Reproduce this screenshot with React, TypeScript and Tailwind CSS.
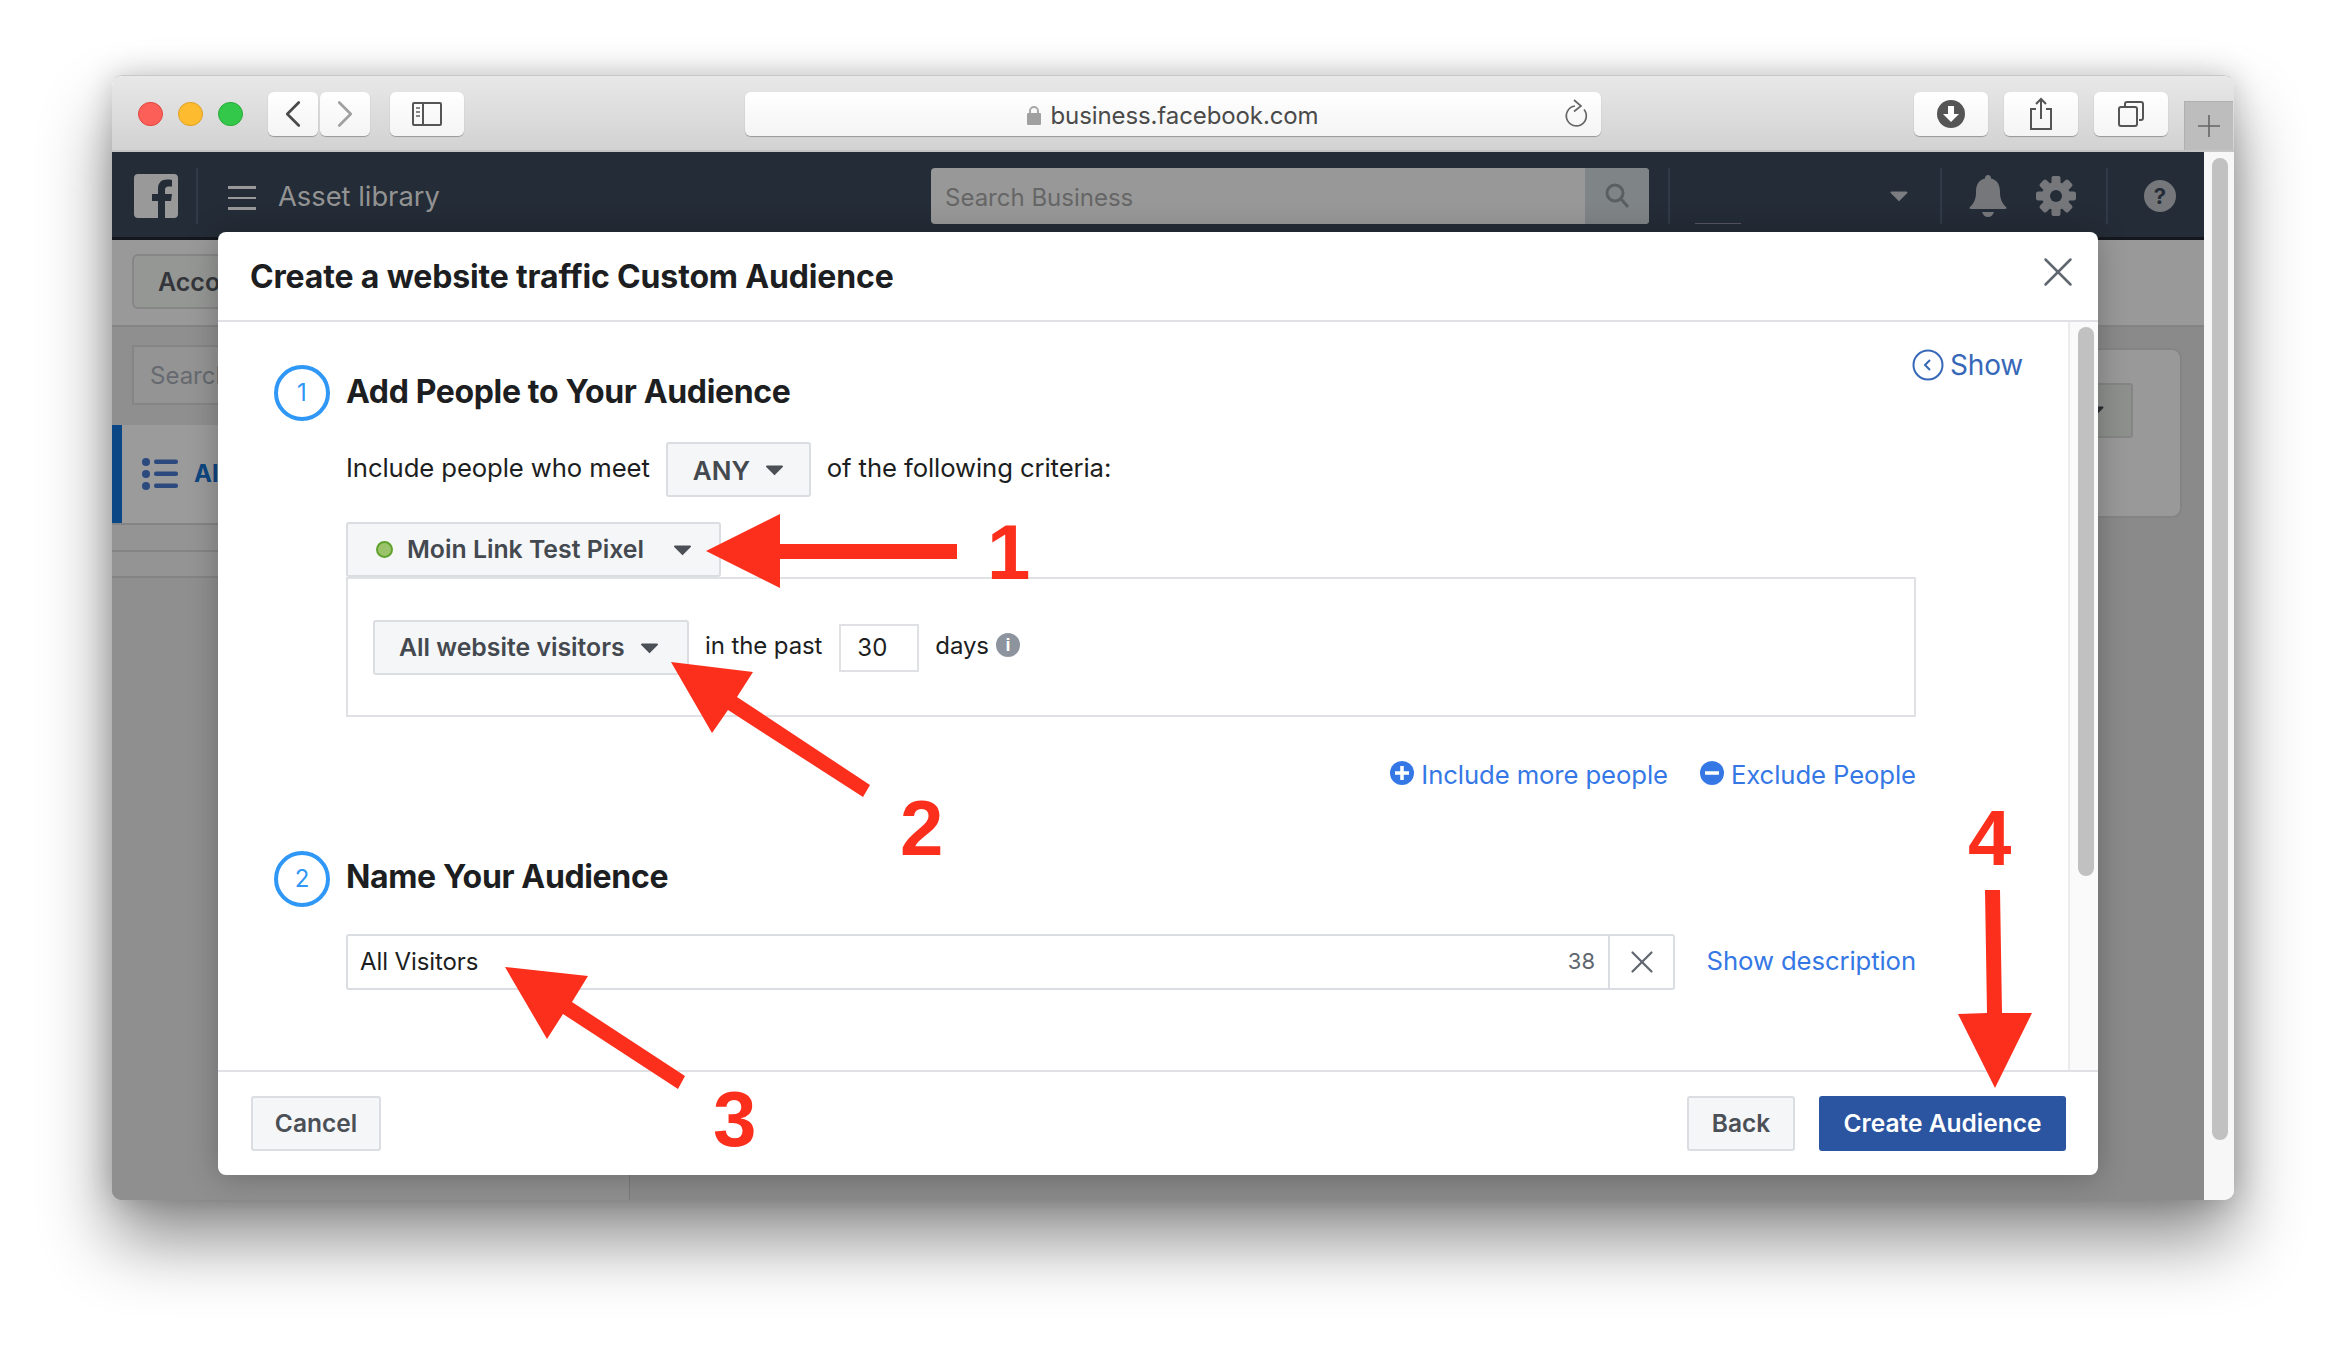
import { ChevronLeft, ChevronRight, X } from 'lucide-react'

const UI_FONT = 'font-["Inter","Noto_Sans",sans-serif]'

function Caret({ className }: { className: string }) {
  return (
    <svg viewBox="0 0 18 12" className={className}>
      <path d="M1.500 1.500h15a1 1 0 0 1 .8 1.600L9.800 10.600a1 1 0 0 1-1.600 0L.7 3.100a1 1 0 0 1 .8-1.600z" fill="currentColor" />
    </svg>
  )
}

function ToolButton({ className, children }: { className: string; children: React.ReactNode }) {
  return (
    <div className={`h-[44px] shrink-0 flex items-center justify-center rounded-[6px] bg-gradient-to-b from-[#ffffff] to-[#f4f4f4] shadow-[0_1px_1px_rgba(0,0,0,0.3)] ${className}`}>
      {children}
    </div>
  )
}

function Toolbar() {
  return (
    <div className="h-[76px] shrink-0 flex items-start pt-[16px] pl-[26px] rounded-t-[10px] border-b-2 border-[#c4c4c4] bg-gradient-to-b from-[#e8e8e8] to-[#d2d2d2]">
      <div className="flex gap-[15px] pt-[10px] shrink-0">
        <div className="w-[25px] h-[24px] rounded-full bg-[#fc5f58] border border-[#e2463f]" />
        <div className="w-[25px] h-[24px] rounded-full bg-[#fdbc30] border border-[#dfa023]" />
        <div className="w-[25px] h-[24px] rounded-full bg-[#34c84a] border border-[#29ab37]" />
      </div>
      <ToolButton className="w-[50px] ml-[25px]"><ChevronLeft size={46} strokeWidth={1.4} className="text-[#4a4a4a]" /></ToolButton>
      <ToolButton className="w-[50px] ml-[2px]"><ChevronRight size={46} strokeWidth={1.4} className="text-[#a0a0a0]" /></ToolButton>
      <ToolButton className="w-[74px] ml-[20px]">
        <svg width="30" height="24" viewBox="0 0 30 24" fill="none" stroke="#555" strokeWidth="2">
          <rect x="1" y="1" width="28" height="22" rx="1" />
          <path d="M11 1v22" />
          <path d="M4 6h4M4 10h4M4 14h4" strokeWidth="2" stroke="#888" />
        </svg>
      </ToolButton>
      <div className="w-[856px] ml-[281px] relative">
        <ToolButton className="w-full">
          <svg width="16" height="20" viewBox="0 0 16 20" className="mr-[8px] mt-[2px] -ml-[1px]">
            <path d="M4 9V6a4 4 0 0 1 8 0v3" fill="none" stroke="#a8a8a8" strokeWidth="2" />
            <rect x="1" y="8" width="14" height="12" rx="1" fill="#a0a0a0" />
          </svg>
          <span className="mt-[3px] font-['Inter',sans-serif] text-[24px] text-[#4a4a4a] tracking-[-0.1px]">business.facebook.com</span>
        </ToolButton>
        <svg width="24" height="30" viewBox="0 0 24 30" fill="none" stroke="#666" strokeWidth="1.700" className="absolute right-[13px] top-[6px]">
          <path d="M20 11.500A10 10 0 1 1 11 8" />
          <path d="M10 2l7 6-7 5.500" fill="none" />
        </svg>
      </div>
      <ToolButton className="w-[74px] ml-[313px]">
        <svg width="28" height="28" viewBox="0 0 28 28">
          <circle cx="14" cy="14" r="14" fill="#555" />
          <path d="M11 6h6v8h5l-8 8-8-8h5z" fill="#fff" />
        </svg>
      </ToolButton>
      <ToolButton className="w-[74px] ml-[16px]">
        <svg width="24" height="34" viewBox="0 0 24 34" fill="none" stroke="#555" strokeWidth="2">
          <path d="M7 12H2v20h20V12h-5" />
          <path d="M12 22V2M7 7l5-5 5 5" />
        </svg>
      </ToolButton>
      <ToolButton className="w-[74px] ml-[16px]">
        <svg width="26" height="26" viewBox="0 0 26 26" fill="none" stroke="#555" strokeWidth="2">
          <rect x="1" y="6" width="18" height="19" rx="2" />
          <path d="M7 5V3a2 2 0 0 1 2-2h14a2 2 0 0 1 2 2v14a2 2 0 0 1-2 2h-2" />
        </svg>
      </ToolButton>
      <div className="w-[49px] h-[49px] ml-[16px] mt-[9px] flex items-center justify-center bg-[#bdbdbd] border-l border-t border-[#b0b0b0] shrink-0">
        <svg width="22" height="22" viewBox="0 0 22 22" stroke="#666" strokeWidth="1.600"><path d="M11 0v22M0 11h22" /></svg>
      </div>
    </div>
  )
}

function Gear() {
  return (
    <svg width="40" height="40" viewBox="0 0 40 40" className="ml-[29px] shrink-0">
      {[0, 45, 90, 135].map(a => (
        <rect key={a} x="15.500" y="0" width="9" height="40" rx="2" fill="#75777b" transform={`rotate(${a} 20 20)`} />
      ))}
      <circle cx="20" cy="20" r="14" fill="#75777b" />
      <circle cx="20" cy="20" r="6" fill="#242c37" />
    </svg>
  )
}

function NavBar() {
  return (
    <div className="h-[88px] shrink-0 flex items-start pt-[16px] bg-[#242c37] border-b-[3px] border-[#14181e] text-[#9a9a9a]">
      <svg width="44" height="44" viewBox="0 0 44 44" className="ml-[22px] mt-[6px] shrink-0">
        <path d="M4 0h36a4 4 0 0 1 4 4v36a4 4 0 0 1-4 4H31V27h6l1-7h-7v-4c0-2 1-3.500 3.500-3.500H38V6c-1-.2-3-.4-5-.4-5.500 0-9 3.300-9 9V20h-6v7h6v17H4a4 4 0 0 1-4-4V4a4 4 0 0 1 4-4z" fill="#999" />
      </svg>
      <div className="w-[2px] h-[56px] ml-[18px] bg-[#303b49] shrink-0" />
      <div className="ml-[30px] mt-[18px] flex flex-col gap-[8px] shrink-0">
        <div className="w-[28px] h-[2.500px] bg-[#999]" />
        <div className="w-[28px] h-[2.500px] bg-[#999]" />
        <div className="w-[28px] h-[2.500px] bg-[#999]" />
      </div>
      <span className="ml-[22px] mt-[11px] w-[653px] shrink-0 font-['Inter',sans-serif] text-[27.300px] leading-[36px] text-[#939393]">Asset library</span>
      <div className="w-[718px] h-[56px] shrink-0 flex rounded-[4px] overflow-hidden bg-[#989898]">
        <span className="flex-1 pl-[14px] pt-[2px] font-['Inter',sans-serif] text-[24px] leading-[56px] text-[#666]">Search Business</span>
        <div className="w-[64px] flex items-center justify-center bg-[#7f8487]">
          <svg width="24" height="26" viewBox="0 0 24 26" fill="none" stroke="#5a5f63" strokeWidth="3">
            <circle cx="10" cy="10" r="8" /><path d="M16 16l7 8" />
          </svg>
        </div>
      </div>
      <div className="w-[2px] h-[56px] ml-[19px] bg-[#303b49] shrink-0" />
      <div className="relative w-[270px] h-[56px] shrink-0 flex items-center justify-end pr-[32px]">
        <Caret className="w-[18px] h-[12px] text-[#7b7d80]" />
        <div className="absolute left-[25px] bottom-0 w-[46px] h-px bg-[#556]" />
      </div>
      <div className="w-[2px] h-[56px] bg-[#303b49] shrink-0" />
      <div className="relative w-[166px] h-[56px] shrink-0 flex items-center">
        <svg width="38" height="42" viewBox="0 0 38 42" className="ml-[27px] shrink-0" fill="#75777b">
          <path d="M19 0c2 0 3 1.500 3 3.500C29 5 31 11 31 17c0 7 2 11 6 15 1 1 .5 2-1 2H2c-1.500 0-2-1-1-2 4-4 6-8 6-15C7 11 9 5 16 3.500 16 1.500 17 0 19 0zM13 37h12c-1 3-3 5-6 5s-5-2-6-5z" />
        </svg>
        <Gear />
        <div className="absolute right-0 top-0 w-[2px] h-[56px] bg-[#303b49]" />
      </div>
      <div className="ml-[36px] mt-[12px] w-[32px] h-[32px] rounded-full bg-[#75777b] text-[#242c37] flex items-center justify-center font-['Inter',sans-serif] font-bold text-[22px] shrink-0">?</div>
    </div>
  )
}

// The dimmed asset library page behind the dialog.
function BackgroundPage() {
  return (
    <div className="flex-1 flex flex-col min-h-0 bg-[#8b8b8b]">
      <div className="h-[87px] shrink-0 pl-[20px] pt-[14px] bg-[#999999] border-b-2 border-[#848484]">
        <div className="w-[220px] h-[55px] pl-[24px] rounded-[6px] border-2 border-[#868686] bg-[#959795] font-['Inter',sans-serif] font-semibold text-[25px] leading-[53px] text-[#33353a]">Acco</div>
      </div>
      <div className="flex-1 flex min-h-0">
        <div className="w-[518px] shrink-0 flex flex-col border-r border-[#7a7a7a] bg-[#8f8f90]">
          <div className="h-[98px] shrink-0 pl-[20px] pt-[18px]">
            <div className="w-[300px] h-[60px] pl-[16px] border-2 border-[#858585] bg-[#949494] font-['Inter',sans-serif] text-[24px] leading-[58px] text-[#666a70]">Search</div>
          </div>
          <div className="h-[98px] shrink-0 flex items-center border-l-[10px] border-[#0b4785] bg-[#9b9b9b]">
            <svg width="36" height="34" viewBox="0 0 36 34" className="ml-[20px] shrink-0" fill="#2c4a7e">
              <circle cx="4" cy="5" r="4" /><circle cx="4" cy="17" r="4" /><circle cx="4" cy="29" r="4" />
              <rect x="12" y="2.500" width="24" height="4.500" rx="2" /><rect x="12" y="14.500" width="24" height="4.500" rx="2" /><rect x="12" y="26.500" width="24" height="4.500" rx="2" />
            </svg>
            <span className="ml-[16px] font-['Inter',sans-serif] font-bold text-[24px] text-[#0e4680]">All</span>
          </div>
          <div className="h-[27px] shrink-0 border-t-2 border-[#848484] bg-[#949494]" />
          <div className="h-[26px] shrink-0 border-t-2 border-[#848484] bg-[#949494]" />
          <div className="flex-1 border-t-2 border-[#848484] bg-[#8f8f8f]" />
        </div>
        <div className="flex-1 flex justify-end items-start pt-[21px] pr-[22px] bg-[#8a8a8a]">
          <div className="w-[400px] h-[170px] flex justify-end items-start pt-[33px] pr-[47px] rounded-[10px] border-2 border-[#848484] bg-[#999999]">
            <div className="w-[120px] h-[55px] flex items-center justify-end pr-[27px] rounded-[3px] border-2 border-[#858585] bg-[#8e908e]">
              <Caret className="w-[18px] h-[12px] text-[#2b2d31]" />
            </div>
          </div>
        </div>
      </div>
    </div>
  )
}

function StepHeading({ n, title }: { n: number; title: string }) {
  return (
    <div className="flex items-center">
      <div className="w-[56px] h-[56px] shrink-0 rounded-full border-[4px] border-[#2f97f5] flex items-center justify-center font-['Inter',sans-serif] text-[24px] text-[#2f97f5]">{n}</div>
      <h2 className="ml-[16px] mb-[3px] font-['Inter',sans-serif] font-bold text-[32px] leading-[40px] text-[#1c1e21] tracking-[-0.35px]">{title}</h2>
    </div>
  )
}

function SelectButton({ className, children }: { className: string; children: React.ReactNode }) {
  return (
    <div className={`h-[55px] shrink-0 flex items-center rounded-[3px] border-2 border-[#dadde1] bg-[#f5f6f7] font-['Inter',sans-serif] font-semibold text-[24.800px] text-[#444950] ${className}`}>
      {children}
    </div>
  )
}

function Dialog() {
  return (
    <div className={`absolute left-[106px] top-[156px] w-[1880px] h-[943px] flex flex-col rounded-[8px] bg-white shadow-[0_2px_30px_rgba(0,0,0,0.25)] ${UI_FONT}`}>
      <div className="h-[90px] shrink-0 flex items-center justify-between pl-[32px] pr-[15px] border-b-2 border-[#dfe1e5]">
        <h1 className="mt-[2px] font-['Inter',sans-serif] font-bold text-[32px] text-[#1c1e21] tracking-[-0.16px]">Create a website traffic Custom Audience</h1>
        <X size={50} strokeWidth={1.2} className="text-[#606770] mb-[8px]" />
      </div>
      <div className="flex-1 flex min-h-0">
        <div className="relative flex-1 pl-[56px] pt-[43px] pr-[152px]">
          <div className="absolute right-[45px] top-[25px] flex items-center gap-[6px] text-[#3768b8]">
            <svg width="32" height="32" viewBox="0 0 32 32" fill="none" stroke="currentColor" strokeWidth="2">
              <circle cx="16" cy="16" r="14.500" /><path d="M18 11l-5 5 5 5" />
            </svg>
            <span className="text-[28px] leading-[36px] tracking-[-0.2px]">Show</span>
          </div>
          <StepHeading n={1} title="Add People to Your Audience" />
          <div className="pl-[72px]">
            <div className="flex items-center mt-[21px] text-[25.700px] text-[#1c1e21]">
              <span className="mb-[3px] tracking-[-0.1px]">Include people who meet</span>
              <SelectButton className="ml-[16px] w-[145px] pl-[25px] text-[#4b4f56]">
                <span className="text-[26px] mt-[2px]">ANY</span>
                <Caret className="w-[19px] h-[12px] ml-[15px] text-[#4b4f56]" />
              </SelectButton>
              <span className="ml-[16px] mb-[3px] tracking-[-0.1px]">of the following criteria:</span>
            </div>
            <SelectButton className="mt-[25px] w-[375px] pl-[28px] text-[#1c1e21]">
              <span className="w-[17px] h-[17px] rounded-full bg-[#9bc46a] border-2 border-[#5fa22e]" />
              <span className="ml-[14px]">Moin Link Test Pixel</span>
              <Caret className="w-[19px] h-[12px] ml-[29px] text-[#4b4f56]" />
            </SelectButton>
            <div className="h-[140px] flex items-start pl-[25px] pt-[41px] border-2 border-[#dfe1e5] text-[24px] text-[#1c1e21]">
              <SelectButton className="w-[316px] pl-[24px]">
                All website visitors
                <Caret className="w-[19px] h-[12px] ml-[15px] text-[#4b4f56]" />
              </SelectButton>
              <span className="ml-[16px] mt-[8px] tracking-[-0.1px]">in the past</span>
              <div className="ml-[17px] mt-[4px] w-[80px] h-[48px] pl-[16px] border-2 border-[#dfe1e5] leading-[44px]">30</div>
              <span className="ml-[16px] mt-[8px] tracking-[-0.1px]">days</span>
              <div className="ml-[7px] mt-[13px] w-[24px] h-[24px] rounded-full bg-[#8d949e] text-white flex items-center justify-center font-['Liberation_Sans',sans-serif] font-bold text-[18px]">i</div>
            </div>
            <div className="flex justify-end items-center gap-[32px] mt-[39px] text-[25.700px] text-[#3578e5] tracking-[-0.1px]">
              <span className="flex items-center gap-[7px]">
                <svg width="24" height="24" viewBox="0 0 24 24" className="mb-[4px]"><circle cx="12" cy="12" r="12" fill="#3578e5" /><path d="M12 5v14M5 12h14" stroke="#fff" strokeWidth="3.500" /></svg>
                <span>Include more people</span>
              </span>
              <span className="flex items-center gap-[7px]">
                <svg width="24" height="24" viewBox="0 0 24 24" className="mb-[4px]"><circle cx="12" cy="12" r="12" fill="#3578e5" /><path d="M5 12h14" stroke="#fff" strokeWidth="3.500" /></svg>
                <span>Exclude People</span>
              </span>
            </div>
          </div>
          <div className="mt-[56px]"><StepHeading n={2} title="Name Your Audience" /></div>
          <div className="pl-[72px] mt-[27px] flex items-center justify-between">
            <div className="w-[1329px] h-[56px] flex items-center rounded-[3px] border-2 border-[#dadde1] pl-[12px] text-[24px] text-[#1c1e21]">
              <span className="flex-1 tracking-[-0.1px]">All Visitors</span>
              <span className="pr-[13px] text-[22px] text-[#606770]">38</span>
              <div className="w-[65px] h-full flex items-center justify-center border-l-2 border-[#dadde1]">
                <X size={38} strokeWidth={1.4} className="text-[#606770]" />
              </div>
            </div>
            <span className="text-[25.700px] text-[#3578e5] tracking-[-0.1px]">Show description</span>
          </div>
        </div>
        <div className="w-[30px] shrink-0 pl-[8px] pt-[5px] border-l-2 border-[#ececec] bg-[#fafafa]">
          <div className="w-[16px] h-[549px] rounded-full bg-[#c1c1c1]" />
        </div>
      </div>
      <div className="h-[105px] shrink-0 flex items-center gap-[24px] pl-[33px] pr-[32px] border-t-2 border-[#dfe1e5]">
        <div className="w-[130px] h-[55px] mr-auto flex items-center justify-center rounded-[3px] border-2 border-[#dadde1] bg-[#f5f6f7] font-semibold text-[24.500px] text-[#4b4f56]">Cancel</div>
        <div className="w-[108px] h-[55px] flex items-center justify-center rounded-[3px] border-2 border-[#dadde1] bg-[#f5f6f7] font-semibold text-[24.500px] text-[#4b4f56]">Back</div>
        <div className="w-[247px] h-[55px] flex items-center justify-center rounded-[3px] bg-[#2b55a1] font-semibold text-[24.500px] text-white">Create Audience</div>
      </div>
    </div>
  )
}

// Red annotations drawn over the screenshot, page coordinates.
function Annotations() {
  return (
    <>
      <svg className="absolute left-0 top-0 pointer-events-none" width="2346" height="1348" viewBox="0 0 2346 1348" fill="#fc2f1c">
        <polygon points="706,551 780,514 780,544 957,544 957,559 780,559 780,588" />
        <polygon points="671,662 753,672 737,697 870,785 863,797 728,710 712,733" />
        <polygon points="505,967 588,976 572,1002 685,1076 678,1089 563,1014 547,1039" />
        <polygon points="1985,890 2000,890 2002,1013 2032,1013 1995,1088 1958,1014 1987,1013" />
      </svg>
      <span className="absolute left-[987px] top-[507px] font-['Liberation_Sans',sans-serif] font-bold text-[78px] leading-[90px] text-[#fc2f1c]">1</span>
      <span className="absolute left-[900px] top-[783px] font-['Liberation_Sans',sans-serif] font-bold text-[78px] leading-[90px] text-[#fc2f1c]">2</span>
      <span className="absolute left-[713px] top-[1074px] font-['Liberation_Sans',sans-serif] font-bold text-[78px] leading-[90px] text-[#fc2f1c]">3</span>
      <span className="absolute left-[1968px] top-[793px] font-['Liberation_Sans',sans-serif] font-bold text-[78px] leading-[90px] text-[#fc2f1c]">4</span>
    </>
  )
}

export default function App() {
  return (
    <div className="relative w-[2346px] h-[1348px] overflow-hidden bg-white pl-[112px] pt-[75px]">
      <div className="relative w-[2122px] h-[1125px] flex flex-col rounded-[10px] border-t border-[#c8c8c8] shadow-[0_40px_70px_rgba(0,0,0,0.45),0_0_30px_rgba(0,0,0,0.2)]">
        <Toolbar />
        <div className="flex-1 flex min-h-0">
          <div className="w-[2092px] shrink-0 flex flex-col rounded-bl-[10px] overflow-hidden">
            <NavBar />
            <BackgroundPage />
          </div>
          <div className="flex-1 pl-[8px] pt-[6px] rounded-br-[10px] bg-[#f7f7f7]">
            <div className="w-[16px] h-[982px] rounded-full bg-[#c1c1c1]" />
          </div>
        </div>
        <Dialog />
      </div>
      <Annotations />
    </div>
  )
}
